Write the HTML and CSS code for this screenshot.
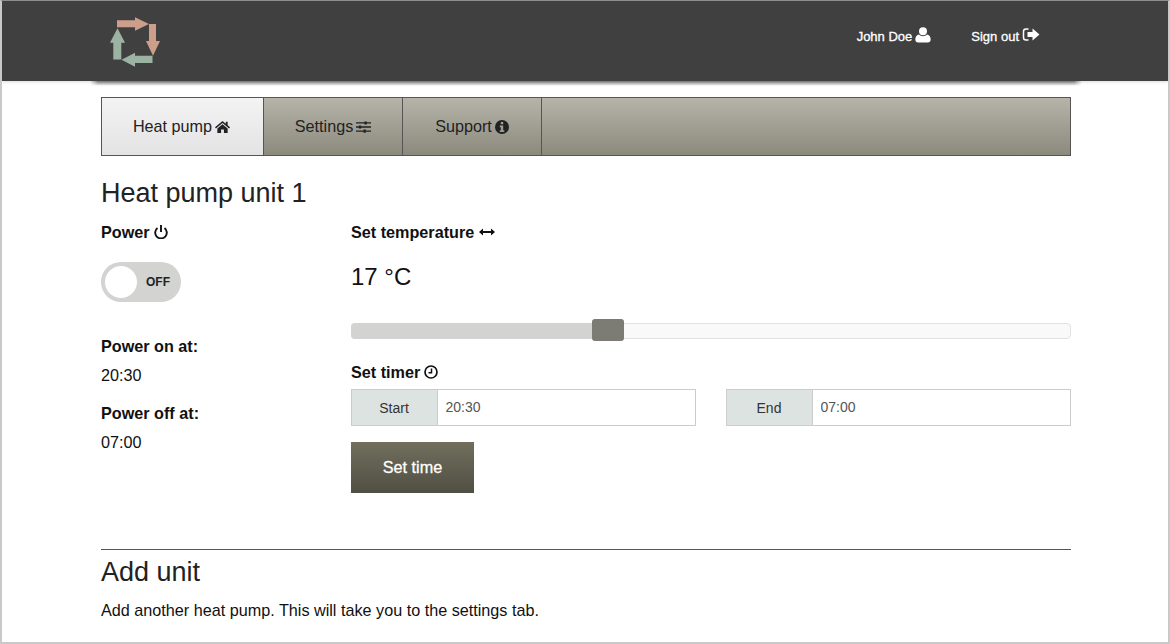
FILE: index.html
```html
<!DOCTYPE html>
<html lang="en">
<head>
  <meta charset="UTF-8" />
  <title>Heat pump</title>
  <link rel="stylesheet" href="styles.css">
</head>
<body>
  <div class="page">
    <header class="topbar">
      <div class="topbar-inner">
        <svg class="logo" viewBox="110 17 50 50" aria-label="Logo">
          <path class="logo-warm" d="M117 20.300H135V17.300L149 24L135 30.700V27.300H117Z"/>
          <path class="logo-warm" d="M149 24H156V41H160L153 55.700L146 41H149Z"/>
          <path class="logo-cool" d="M152.500 55.700V63H135V66.700L121.500 59.700L135 52.700V55.700Z"/>
          <path class="logo-cool" d="M121.300 59.500H113.300V42.700H110L117.500 28.300L125 42.700H121.300Z"/>
        </svg>
        <nav class="usernav">
          <a class="usernav-link">John Doe
            <svg class="icon icon-lg" viewBox="0 0 16 16"><circle cx="8" cy="4.300" r="4"/><path d="M0.300 12.500C0.300 9.500 2 8 4 7.500C5 8.700 6.500 9.200 8 9.200C9.500 9.200 11 8.700 12 7.500C14 8 15.700 9.500 15.700 12.500C15.700 14.500 14.500 15.500 12.800 15.500H3.200C1.500 15.500 0.300 14.500 0.300 12.500Z"/></svg>
          </a>
          <a class="usernav-link">Sign out
            <svg class="icon icon-lg" viewBox="0 0 18 16"><path d="M6.500 2H4C2.500 2 1.500 3 1.500 4.500V10.500C1.500 12 2.500 13 4 13H6.500" fill="none" stroke="#fff" stroke-width="1.500"/><path d="M10.500 1.500L17.500 7.500L10.500 13.500V10H5.500V5H10.500Z"/></svg>
          </a>
        </nav>
      </div>
    </header>

    <main class="container">
      <div class="tabs">
        <a class="tab tab-active">Heat pump
          <svg class="icon" viewBox="0 0 16 14"><path d="M8 0.500L11.500 3.500V1.500H13.500V5.200L16 7.300L15 8.500L8 2.700L1 8.500L0 7.300Z"/><path d="M8 4L13.500 8.600V13.500H9.500V9.700H6.500V13.500H2.500V8.600Z"/></svg>
        </a>
        <a class="tab">Settings
          <svg class="icon" viewBox="0 0 16 14"><path d="M0 2H9V1H11.500V2H16V3.300H11.500V4.300H9V3.300H0ZM0 6.300H3V5.300H5.500V6.300H16V7.700H5.500V8.700H3V7.700H0ZM0 10.700H8V9.700H10.500V10.700H16V12H10.500V13H8V12H0Z"/></svg>
        </a>
        <a class="tab">Support
          <svg class="icon icon-info" viewBox="0 0 14 14"><path fill-rule="evenodd" d="M7 0A7 7 0 1 0 7 14A7 7 0 1 0 7 0ZM5.800 2H8.200V4.200H5.800ZM4.800 5.500H8.200V10.300H9.300V12H4.800V10.300H5.800V7.200H4.800Z"/></svg>
        </a>
      </div>

      <h1 class="unit-title">Heat pump unit 1</h1>

      <div class="unit">
        <section class="unit-left">
          <h2 class="label">Power
            <svg class="icon icon-sm" viewBox="0 0 14 14"><path d="M3.500 3A5.800 5.800 0 1 0 10.500 3" fill="none" stroke="#111" stroke-width="1.900"/><path d="M7 0V7" fill="none" stroke="#111" stroke-width="1.900"/></svg>
          </h2>
          <div class="toggle">
            <span class="toggle-knob"></span>
            <span class="toggle-text">OFF</span>
          </div>
          <h2 class="label label-on">Power on at:</h2>
          <p class="time-value">20:30</p>
          <h2 class="label label-off">Power off at:</h2>
          <p class="time-value">07:00</p>
        </section>

        <section class="unit-right">
          <h2 class="label label-temp">Set temperature
            <svg class="icon icon-wide" viewBox="0 0 16 8"><path d="M0 4L4 0.500V3H12V0.500L16 4L12 7.500V5H4V7.500Z"/></svg>
          </h2>
          <div class="temperature">17 °C</div>
          <div class="slider">
            <div class="slider-fill"></div>
            <div class="slider-handle"></div>
          </div>
          <h2 class="label label-timer">Set timer
            <svg class="icon icon-sm" viewBox="0 0 14 14"><circle cx="7" cy="7" r="6" fill="none" stroke="#111" stroke-width="1.700"/><path d="M7.500 3.500V7.800H4.500" fill="none" stroke="#111" stroke-width="1.500"/></svg>
          </h2>
          <div class="timer-row">
            <div class="input-group">
              <span class="input-addon">Start</span>
              <input class="input-field" type="text" value="20:30">
            </div>
            <div class="input-group">
              <span class="input-addon">End</span>
              <input class="input-field" type="text" value="07:00">
            </div>
          </div>
          <button class="btn-time">Set time</button>
        </section>
      </div>

      <hr class="divider">
      <h1 class="add-title">Add unit</h1>
      <p class="add-text">Add another heat pump. This will take you to the settings tab.</p>
    </main>
  </div>
</body>
</html>
```

FILE: styles.css
```css
html, body {
  height: 100%;
  margin: 0;
  padding: 0;
}

body {
  font-family: "Liberation Sans", Arial, sans-serif;
  font-size: 16.2px;
  color: #111;
  background-color: #fff;
}

.page {
  box-sizing: border-box;
  height: 644px;
  overflow: hidden;
  border-style: solid;
  border-color: #8e8e8e #c9c9c9 #c9c9c9 #c9c9c9;
  border-width: 1px 2px 2px 2px;
}

.topbar {
  position: relative;
  height: 80px;
  background-color: #404040;
  box-shadow: 0 1px 3px rgba(0, 0, 0, 0.15);
}

/* darker shadow under the middle part of the bar only, faded at both ends */
.topbar::after {
  content: "";
  position: absolute;
  top: 80px;
  left: 88px;
  right: 86px;
  height: 5px;
  background-image: linear-gradient(rgba(0, 0, 0, 0.5), rgba(0, 0, 0, 0));
  -webkit-mask-image: linear-gradient(to right, transparent, #000 8px, #000 calc(100% - 8px), transparent);
  mask-image: linear-gradient(to right, transparent, #000 8px, #000 calc(100% - 8px), transparent);
}

.topbar-inner {
  display: flex;
  align-items: flex-start;
  justify-content: space-between;
  box-sizing: border-box;
  height: 80px;
  margin: 0 88px 0 90px;
  padding: 16px 40px 0 18px;
}

.logo {
  width: 50px;
  height: 50px;
}

.logo-warm {
  fill: #cd9f8b;
}

.logo-cool {
  fill: #9cb3a4;
}

.usernav {
  display: flex;
  gap: 40px;
  padding-top: 9px;
}

.usernav-link {
  display: flex;
  align-items: center;
  gap: 3px;
  height: 20px;
  font-size: 13px;
  color: #fff;
  -webkit-text-stroke: 0.3px #fff;
}

.icon {
  width: 15px;
  height: 14px;
  fill: #222;
}

.icon-info {
  width: 14px;
}

.icon-lg {
  width: 16px;
  height: 16px;
  fill: #fff;
  margin-top: -3px;
}

.usernav-link:last-child .icon-lg {
  width: 18px;
}

.icon-sm {
  width: 14px;
  height: 14px;
  fill: #111;
}

.icon-wide {
  width: 16px;
  height: 8px;
  fill: #111;
}

.container {
  width: 970px;
  margin-left: 99px;
}

.tabs {
  display: flex;
  height: 59px;
  box-sizing: border-box;
  margin-top: 16px;
  border: 1px solid #555;
  background-image: linear-gradient(#b6b4a9, #8c8a7d);
}

.tab {
  display: flex;
  align-items: center;
  justify-content: center;
  gap: 3px;
  box-sizing: border-box;
  width: 139px;
  border-right: 1px solid #555;
  color: #222;
}

.tab-active {
  width: 162px;
  padding-right: 2px;
  background-image: linear-gradient(#f3f3f3, #e3e3e3);
}

.unit-title,
.add-title {
  margin: 0;
  font-size: 27px;
  font-weight: normal;
  line-height: 30px;
  color: #222;
}

.unit-title {
  margin-top: 22px;
}

.unit {
  display: flex;
  margin-top: 14px;
}

.unit-left {
  width: 250px;
  flex: none;
}

.unit-right {
  flex: 1;
}

.label {
  display: flex;
  align-items: center;
  gap: 4px;
  margin: 0;
  font-size: 16.2px;
  line-height: 20px;
  font-weight: bold;
}

.label-on {
  margin-top: 34px;
}

.label-off {
  margin-top: 18px;
}

.label-temp {
  gap: 5px;
}

.label-timer {
  margin-top: 23px;
}

.time-value {
  margin: 9px 0 0;
  line-height: 20px;
}

.toggle {
  display: flex;
  align-items: center;
  justify-content: space-between;
  box-sizing: border-box;
  width: 80px;
  height: 40px;
  margin-top: 20px;
  padding: 0 11px 0 4px;
  border-radius: 20px;
  background-color: #d3d3d1;
}

.toggle-knob {
  width: 32px;
  height: 32px;
  border-radius: 50%;
  background-color: #fff;
}

.toggle-text {
  font-size: 12px;
  font-weight: bold;
  color: #222;
}

.temperature {
  margin-top: 20px;
  font-size: 24px;
  line-height: 30px;
}

.slider {
  position: relative;
  box-sizing: border-box;
  height: 16px;
  margin-top: 31px;
  border: 1px solid #e2e2e2;
  border-radius: 4px;
  background-color: #f9f9f9;
}

.slider-fill {
  width: 250px;
  height: 16px;
  margin: -1px;
  border-radius: 4px 0 0 4px;
  background-color: #d3d3d1;
}

.slider-handle {
  position: absolute;
  top: -5px;
  left: 240px;
  width: 32px;
  height: 22px;
  border-radius: 3px;
  background-color: #7c7c74;
}

.timer-row {
  display: flex;
  justify-content: space-between;
  margin-top: 7px;
}

.input-group {
  display: flex;
  box-sizing: border-box;
  width: 345px;
  height: 37px;
  border: 1px solid #ccc;
}

.input-addon {
  display: flex;
  align-items: center;
  justify-content: center;
  flex: none;
  width: 86px;
  border-right: 1px solid #ccc;
  padding: 1px 1px 0 0;
  box-sizing: border-box;
  font-size: 14px;
  color: #333;
  background-color: #dde3e0;
}

.input-field {
  flex: 1;
  min-width: 0;
  border: none;
  padding: 0 7.5px 1px;
  font-family: inherit;
  font-size: 14px;
  color: #555;
  background-color: #fff;
}

.btn-time {
  display: block;
  width: 123px;
  height: 51px;
  margin-top: 16px;
  border: none;
  font-family: inherit;
  font-size: 16.2px;
  color: #fff;
  -webkit-text-stroke: 0.3px #fff;
  background-image: linear-gradient(#716e5d, #504f43);
}

.divider {
  height: 1px;
  margin: 56px 0 0;
  border: none;
  background-color: #555;
}

.add-title {
  margin-top: 7px;
}

.add-text {
  margin: 13px 0 0;
  line-height: 20px;
}
```
